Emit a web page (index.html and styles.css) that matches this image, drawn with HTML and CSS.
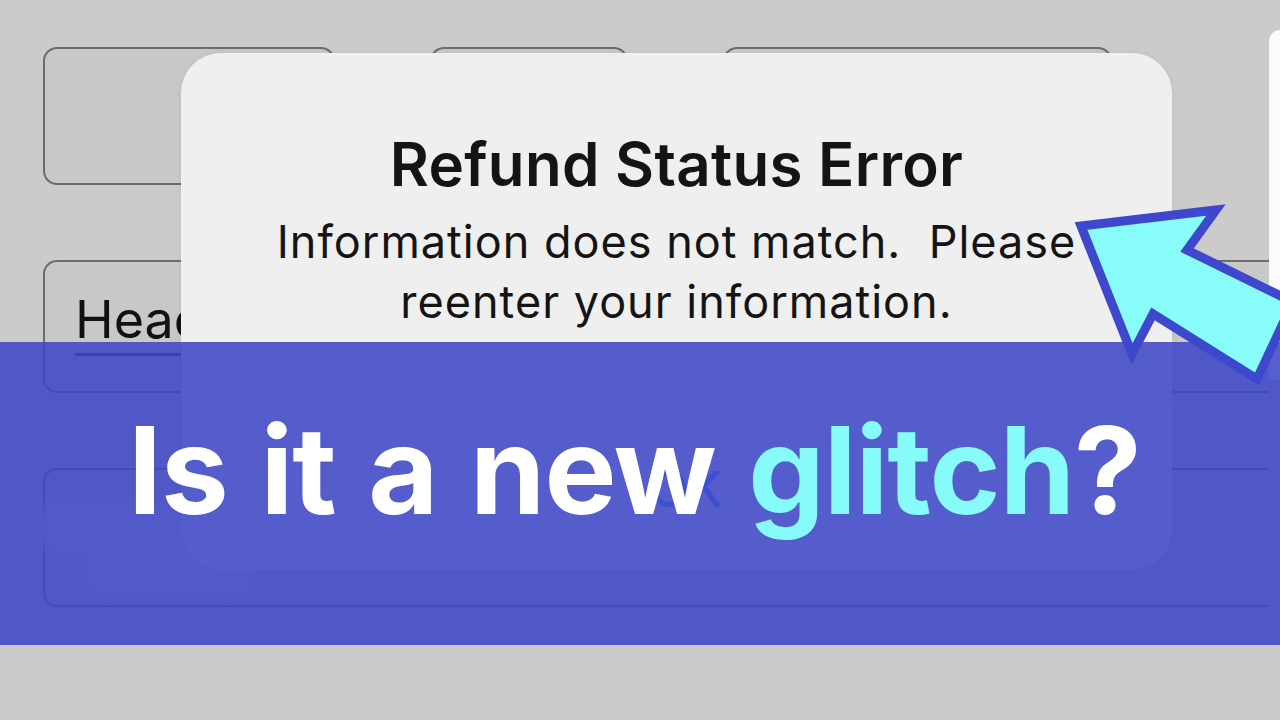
FILE: index.html
```html
<!DOCTYPE html>
<html lang="en">
<head>
  <meta charset="UTF-8">
  <meta name="viewport" content="width=device-width, initial-scale=1.0">
  <title>Refund Status Error</title>
  <link rel="stylesheet" href="styles.css">
</head>
<body>
  <div class="thumb">
    <!-- phone form behind the alert -->
    <div class="screen">
      <div class="form">
        <div class="row-top">
          <div class="field f1"></div>
          <div class="field f2"></div>
          <div class="field f3"></div>
        </div>
        <div class="field wide typed-field">
          <span class="typed">Head</span>
        </div>
        <div class="field wide tall">
          <div class="smudge smudge-a"></div>
          <div class="smudge smudge-b"></div>
        </div>
      </div>
      <div class="edge"></div>
    </div>

    <div class="alert">
      <div class="alert-body">
        <h2>Refund Status Error</h2>
        <p>Information does not match.&nbsp; Please<br>reenter your information.</p>
      </div>
      <div class="alert-actions">
        <button>OK</button>
      </div>
    </div>

    <div class="banner">
      <h1>Is it a new <span class="hl">glitch</span>?</h1>
    </div>

    <svg class="arrow" viewBox="0 0 1280 720" width="1280" height="720">
      <polygon points="1081,226 1216,210 1187,250 1293,302 1257,379 1153,314 1132,354"
               fill="#88fcf9" stroke="#3d48cc" stroke-width="9" stroke-linejoin="miter"/>
    </svg>
  </div>
</body>
</html>
```

FILE: styles.css
```css
/* Base */
body {
  margin: 0;
  background: #cbcbcb;
}
.thumb {
  position: relative;
  width: 1280px;
  height: 720px;
  overflow: hidden;
  background: #cbcbcb;
  font-family: 'Inter', 'Liberation Sans', sans-serif;
}

/* Form underneath */
.screen {
  display: flex;
  padding-top: 30px;
}
.form {
  width: 1269px;
  flex: none;
  box-sizing: border-box;
  padding: 17px 0 0 43px;
  display: flex;
  flex-direction: column;
  gap: 75px;
}
.row-top {
  display: flex;
  gap: 95px;
  height: 138px;
}
.field {
  position: relative;
  box-sizing: border-box;
  border: 2px solid #6d6d6d;
  border-radius: 14px;
  background: #c8c8c8;
}
.f1 { width: 292px; }
.f2 { width: 198px; }
.f3 { width: 389px; }
.wide {
  border-right: none;
  border-radius: 14px 0 0 14px;
}
.typed-field {
  height: 133px;
  padding: 26px 0 0 30px;
}
.typed {
  font-size: 52px;
  line-height: 63px;
  color: #111;
  white-space: nowrap;
  text-decoration: underline;
  text-decoration-thickness: 3px;
  text-underline-offset: 15px;
  text-decoration-color: #2a2a2a;
}
.tall {
  height: 139px;
}
.smudge {
  position: absolute;
  background: #d9d9d9;
  filter: blur(5px);
}
.smudge-a {
  left: -8px;
  top: 27px;
  width: 265px;
  height: 60px;
  border-radius: 30px;
}
.smudge-b {
  left: 37px;
  top: 70px;
  width: 175px;
  height: 58px;
  border-radius: 24px;
}
.edge {
  flex: 1;
  height: 350px;
  background: #fbfbfb;
  border-top-left-radius: 14px;
}

/* Alert */
.alert {
  position: absolute;
  left: 181px;
  top: 53px;
  width: 991px;
  height: 517px;
  border-radius: 40px;
  background: #efefef;
  box-shadow: 0 0 6px rgba(0,0,0,0.06);
  display: flex;
  flex-direction: column;
  text-align: center;
  color: #141414;
}
.alert-body {
  flex: 1;
  padding-top: 75px;
}
.alert h2 {
  margin: 0;
  font-size: 60px;
  line-height: 1.2;
  font-weight: 600;
  letter-spacing: 0.3px;
}
.alert p {
  margin: 12px 0 0;
  font-size: 45px;
  line-height: 60px;
  font-weight: 400;
  letter-spacing: 1px;
}
.alert-actions {
  height: 163px;
  border-top: 1px solid #c9c9c9;
  display: flex;
  align-items: center;
  justify-content: center;
}
.alert-actions button {
  background: none;
  border: none;
  padding: 0 0 0 20px;
  font-family: inherit;
  font-size: 50px;
  font-weight: 500;
  color: #2a86ff;
}

/* Title band */
.banner {
  position: absolute;
  left: 0;
  top: 342px;
  width: 1280px;
  height: 303px;
  box-sizing: border-box;
  padding: 68px 0 0 128px;
  background: rgba(62, 71, 200, 0.87);
}
.banner h1 {
  margin: 0;
  font-family: 'Inter', sans-serif;
  font-size: 121px;
  line-height: 1;
  font-weight: 700;
  letter-spacing: -1px;
  word-spacing: 5px;
  color: #fff;
  white-space: nowrap;
}
.hl {
  color: #86fbf9;
}

/* Pointer arrow */
.arrow {
  position: absolute;
  left: 0;
  top: 0;
  pointer-events: none;
}
```
